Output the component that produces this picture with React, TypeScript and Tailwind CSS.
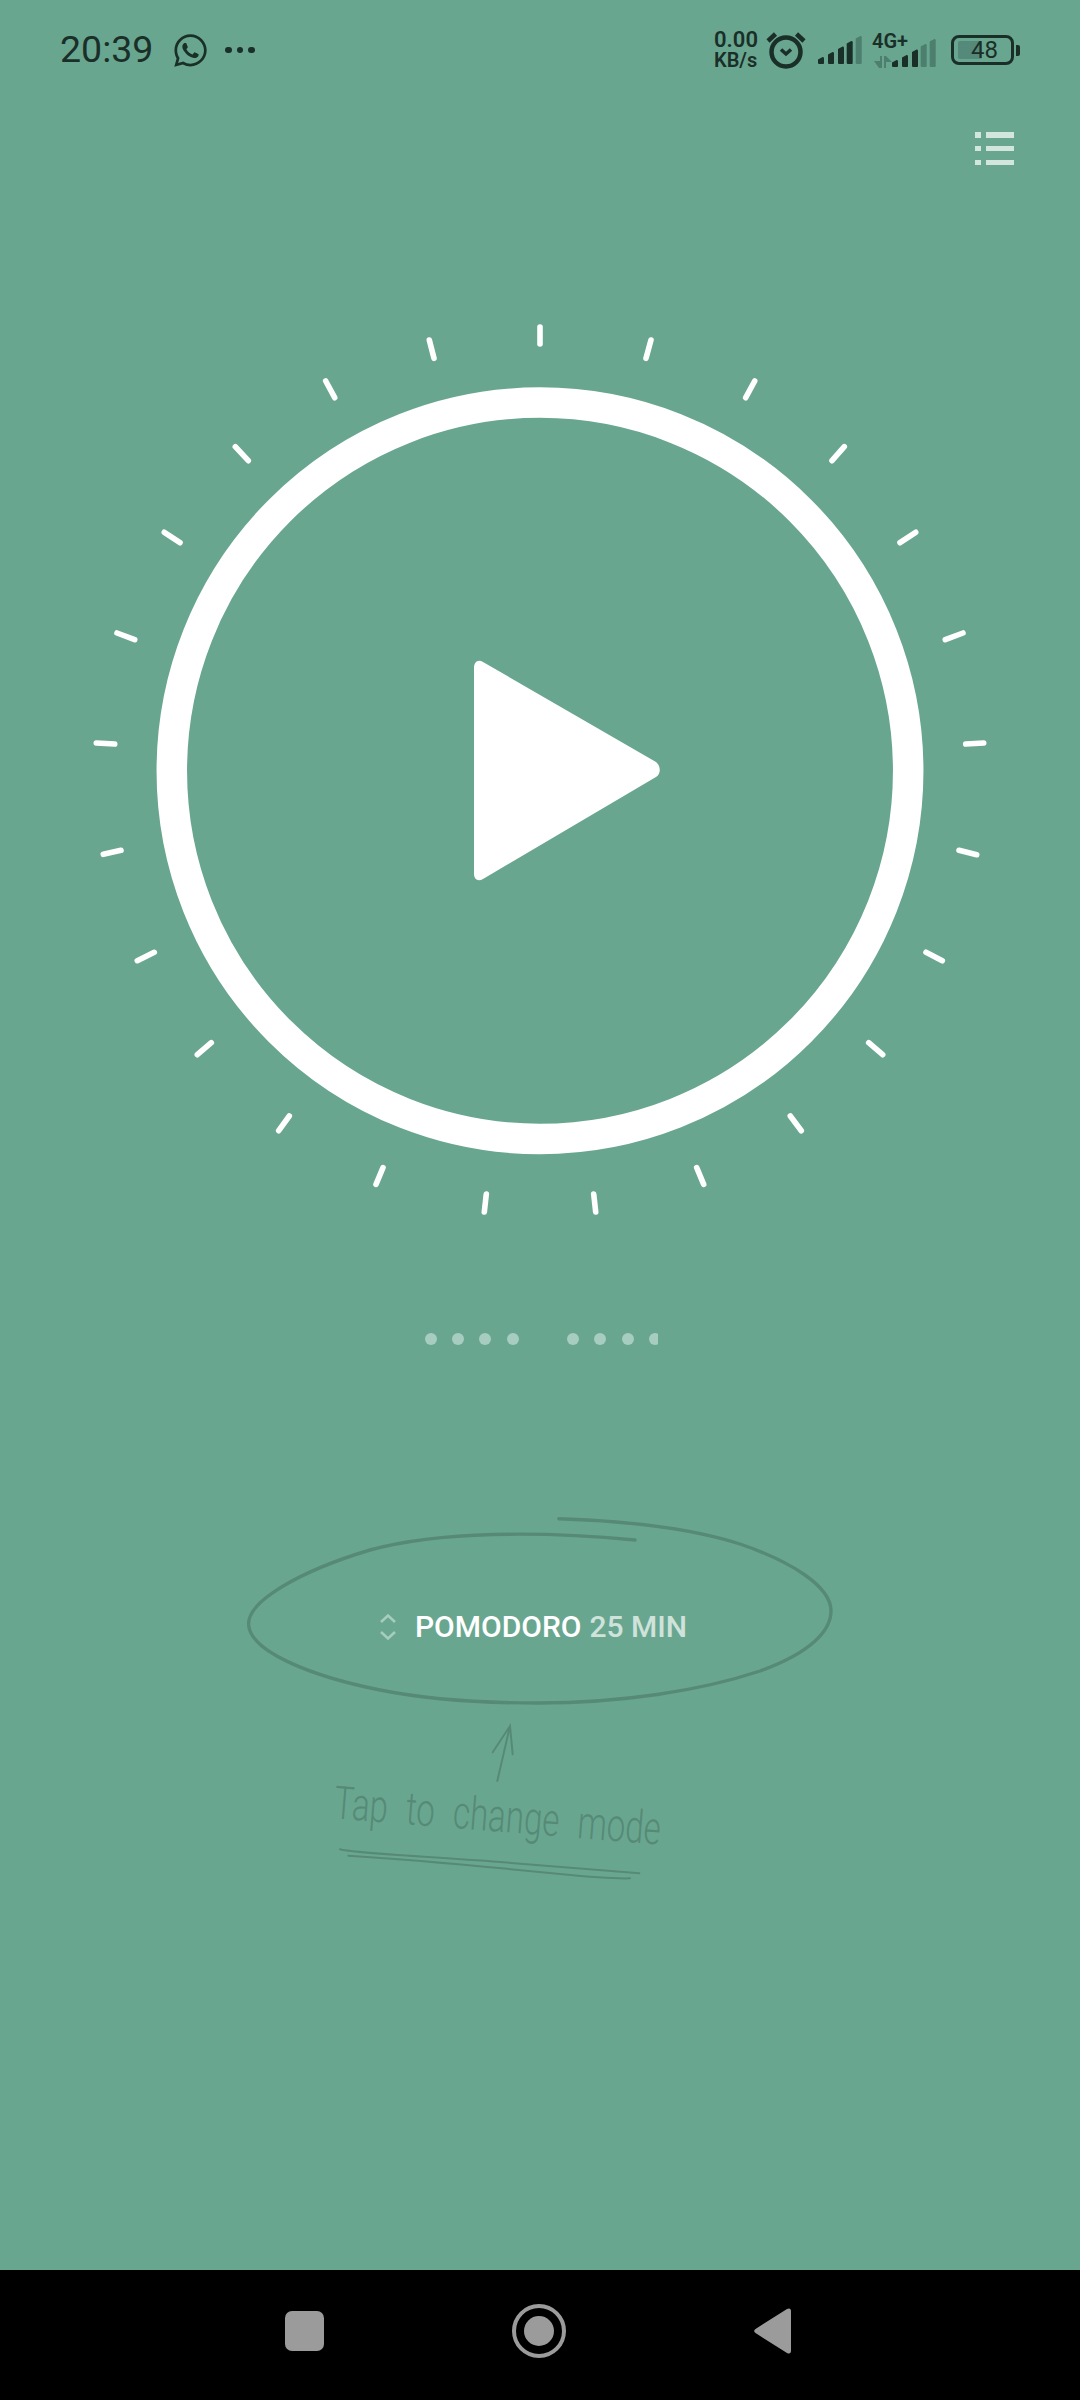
import { FaWhatsapp } from 'react-icons/fa';

const ticks = [
  [540, 327, 540, 344],
  [429.3, 340, 434, 358.3],
  [325.7, 381, 334.7, 397.7],
  [235.3, 446.7, 248.3, 460.7],
  [164.3, 532.3, 180, 542.7],
  [117, 633, 134.7, 639.7],
  [96.3, 743, 114.7, 744],
  [651, 340, 646, 358.3],
  [754.7, 381, 745.7, 397.7],
  [844.3, 446.7, 832, 460.7],
  [915.7, 532.3, 900, 542.7],
  [963, 633, 945.3, 639.7],
  [983.7, 743, 965.7, 744],
  [121, 850.3, 103.3, 854.3],
  [154.3, 952.3, 137.3, 960.7],
  [211.3, 1042.7, 197.3, 1054.7],
  [289.3, 1116, 278.7, 1130.7],
  [383, 1167.7, 376, 1184.3],
  [486.3, 1194, 484.3, 1212],
  [959, 850.3, 976.7, 854.7],
  [926, 952.3, 942.3, 960.7],
  [868.7, 1042.7, 882.7, 1054.7],
  [790.3, 1116, 801.3, 1130.7],
  [696.7, 1167.7, 703.7, 1184.3],
  [593.7, 1194, 595.7, 1212],
];

// signal bars, [x, top] measured from the left of each cluster
const bars = [
  [0, 21],
  [10, 16],
  [20, 10.5],
  [28.7, 5],
  [37.7, 0],
];

function Signal({ faded }: { faded: number }) {
  return (
    <svg width="46" height="28" viewBox="0 0 46 28" className="block">
      {bars.map(([x, top], i) => (
        <path
          key={x}
          d={`M${x} ${28 - 0.8} L${x} ${top + 2.5} L${x + 4.6} ${top} Q${x + 6} ${top} ${x + 6} ${top + 1.2} L${x + 6} 27.2 Q${x + 6} 28 ${x + 5} 28 L${x + 0.8} 28 Z`}
          fill={i >= bars.length - faded ? '#4c7f6d' : '#1a2f28'}
        />
      ))}
    </svg>
  );
}

function StatusBar() {
  return (
    <div className="flex h-[100px] items-center justify-between pl-[60px] pr-[60px] text-[#1a2f28]">
      <div className="flex items-center">
        <span className="w-[93px] text-[37.5px] leading-none">20:39</span>
        <FaWhatsapp className="ml-[19px] h-[37px] w-[37px]" />
        <div className="ml-[16px] flex gap-[5px]">
          <div className="h-[6.5px] w-[6.5px] rounded-full bg-[#1a2f28]" />
          <div className="h-[6.5px] w-[6.5px] rounded-full bg-[#1a2f28]" />
          <div className="h-[6.5px] w-[6.5px] rounded-full bg-[#1a2f28]" />
        </div>
      </div>
      <div className="flex items-center">
        <div className="flex w-[42px] flex-col font-semibold leading-[20px]">
          <span className="text-[22px]">0.00</span>
          <span className="text-[20px]">KB/s</span>
        </div>
        <svg width="42" height="38" viewBox="0 0 42 38" className="ml-[9px] block" fill="none" stroke="#1a2f28">
          <circle cx="21" cy="21" r="14.5" strokeWidth="4.5" />
          <path d="M3 10 L10.5 3 M39 10 L31.5 3" strokeWidth="4.5" />
          <path d="M16 18.5 L21 23 L26 18.5" strokeWidth="3.5" />
        </svg>
        <div className="ml-[11px]">
          <Signal faded={1} />
        </div>
        <div className="relative ml-[8px] h-[34px] w-[66px]">
          <span className="absolute left-0 top-[-3px] text-[20px] font-semibold leading-[22px]">4G+</span>
          <svg width="18" height="12" viewBox="0 0 18 12" className="absolute bottom-[-1px] left-[2px]" fill="#4c7f6d">
            <path d="M5 0 H8 V12 H6 V7 H0 Z" transform="matrix(1 0 0 -1 0 12)" />
            <path d="M10 0 H12 L18 6 H12 V12 H10 Z" />
          </svg>
          <div className="absolute bottom-0 right-0">
            <Signal faded={2} />
          </div>
        </div>
        <div className="ml-[13px] flex items-center">
          <div className="relative flex h-[30px] w-[63px] items-center justify-center rounded-[8px] border-[3px] border-[#1a2f28]">
            <div className="absolute bottom-[3px] left-[4px] top-[3px] w-[24px] rounded-[2px] bg-[#55897a]" />
            <span className="relative pl-[4px] text-[24px] leading-none">48</span>
          </div>
          <div className="ml-[2px] h-[11px] w-[4px] rounded-r-[2px] bg-[#1a2f28]" />
        </div>
      </div>
    </div>
  );
}

function ModePicker() {
  return (
    <div className="relative ml-[240px] mt-[166px] h-[200px] w-[600px]">
      <svg viewBox="240 1510 600 200" className="absolute inset-0 h-full w-full" fill="none" stroke="#568a77" strokeWidth="3.4" strokeLinecap="round">
        <path d="M635 1539 C540 1530 440 1530 370 1549 C300 1570 248 1600 248.6 1623 C249 1650 310 1675 380 1689 C440 1701 500 1702 538 1702 C620 1702 700 1690 760 1670 C810 1652 831 1630 831 1610 C831 1585 790 1560 740 1543 C690 1527 630 1520 558.8 1517.7" />
      </svg>
      <div className="relative flex h-full items-center justify-center pr-[13px] pt-[33px] text-[30px] font-medium leading-none">
        <svg width="16" height="26" viewBox="0 0 16 26" className="block" fill="none" stroke="#a6cdbf" strokeWidth="2.5">
          <path d="M1 8 L8 1.5 L15 8 M1 18 L8 24.5 L15 18" />
        </svg>
        <span className="ml-[19px] text-white">POMODORO</span>
        <span className="ml-[8px] text-[#cfe3db]">25 MIN</span>
      </div>
    </div>
  );
}

export default function App() {
  return (
    <div className="flex h-[2400px] w-[1080px] flex-col overflow-hidden bg-[#69a690] font-['Roboto',sans-serif]">
      <StatusBar />

      <div className="flex justify-end pr-[66px] pt-[32px]">
        <svg width="39" height="33" viewBox="0 0 39 33" className="block" fill="#d3e6de">
          <rect x="0" y="0" width="6" height="6" />
          <rect x="11" y="0" width="28" height="6" />
          <rect x="0" y="14" width="6" height="5" />
          <rect x="11" y="14" width="28" height="5" />
          <rect x="0" y="28" width="6" height="5" />
          <rect x="11" y="28" width="28" height="5" />
        </svg>
      </div>

      <svg viewBox="90 320 900 900" className="mx-auto mt-[155px] block h-[900px] w-[900px]">
        <circle cx="540" cy="770.8" r="368.2" fill="none" stroke="#ffffff" strokeWidth="30.5" />
        {ticks.map(([x1, y1, x2, y2]) => (
          <line key={`${x1}-${y1}`} x1={x1} y1={y1} x2={x2} y2={y2} stroke="#ffffff" strokeWidth="5.6" strokeLinecap="round" />
        ))}
        <path
          d="M474 668 C474 662 478 659 483 662 L656 762 C661 766 661 774 656 777 L483 879 C478 882 474 879 474 874 Z"
          fill="#ffffff"
        />
      </svg>

      <div className="ml-[424.5px] mt-[112.5px] flex w-[233.5px] gap-[15.4px] overflow-hidden">
        <div className="h-[12px] w-[12px] shrink-0 rounded-full bg-[#a6cdbf]" />
        <div className="h-[12px] w-[12px] shrink-0 rounded-full bg-[#a6cdbf]" />
        <div className="h-[12px] w-[12px] shrink-0 rounded-full bg-[#a6cdbf]" />
        <div className="h-[12px] w-[12px] shrink-0 rounded-full bg-[#a6cdbf]" />
        <div className="ml-[33px] h-[12px] w-[12px] shrink-0 rounded-full bg-[#a6cdbf]" />
        <div className="h-[12px] w-[12px] shrink-0 rounded-full bg-[#a6cdbf]" />
        <div className="h-[12px] w-[12px] shrink-0 rounded-full bg-[#a6cdbf]" />
        <div className="h-[12px] w-[12px] shrink-0 rounded-full bg-[#a6cdbf]" />
      </div>

      <ModePicker />

      {/* hand drawn hint */}
      <div className="ml-[330px] mt-[9.5px] flex w-[340px] flex-col">
        <svg viewBox="330 1720 340 64" className="block h-[64px] w-[340px]" fill="none" stroke="#568a77" strokeWidth="2" strokeLinecap="round">
          <path d="M497.3 1781 L510 1726 M492.7 1752.3 L510 1726 L512.7 1754.3" />
        </svg>
        <div className="mb-[22px] mt-[-4px] h-[44px] w-[340px] origin-left rotate-[4.6deg] scale-x-[0.72] whitespace-nowrap pl-[6px] text-[46px] font-light leading-[44px] text-[#568a77] [word-spacing:14px]">
          Tap to change mode
        </div>
        <svg viewBox="330 1846 340 36" className="block h-[36px] w-[340px]" fill="none" stroke="#568a77" strokeWidth="2" strokeLinecap="round">
          <path d="M340 1849.3 C350 1853 420 1856 500 1862 C560 1867 600 1870 639.3 1873.3" />
          <path d="M348.3 1855.7 C420 1860 500 1868 560 1874 C590 1877 610 1879 630 1878.3" />
        </svg>
      </div>

      <div className="flex-1" />

      <div className="flex h-[130px] items-center bg-black pb-[8px] pl-[285px]">
        <div className="h-[40px] w-[39px] rounded-[7px] bg-[#9b9b9b]" />
        <div className="ml-[188px] flex h-[54px] w-[54px] items-center justify-center rounded-full border-[4px] border-[#9b9b9b]">
          <div className="h-[30px] w-[30px] rounded-full bg-[#9b9b9b]" />
        </div>
        <svg width="38" height="46" viewBox="0 0 38 46" className="ml-[188px] block" fill="#9b9b9b">
          <path d="M1.5 21 L33 1 C35.5 -0.3 37 0.8 37 3 L37 43 C37 45.2 35.5 46.3 33 45 L1.5 25 C-0.3 24 -0.3 22 1.5 21 Z" />
        </svg>
      </div>
    </div>
  );
}
